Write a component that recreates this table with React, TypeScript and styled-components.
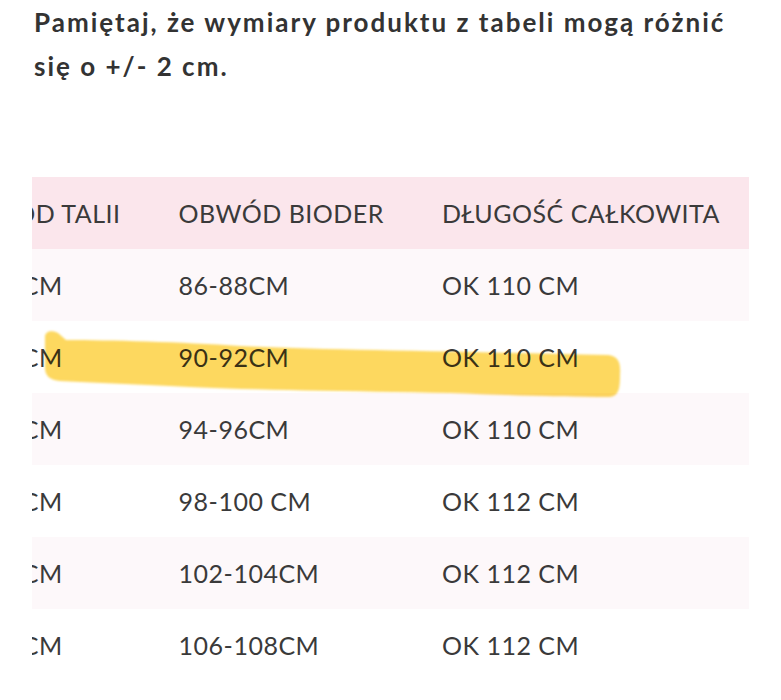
import React, { useLayoutEffect, useRef } from "react";
import styled, { createGlobalStyle } from "styled-components";

const Global = createGlobalStyle`
  html, body { margin: 0; padding: 0; background: #ffffff; }
  body { font-family: Lato, "Open Sans", sans-serif; }
`;

const Page = styled.div`
  position: relative;
  width: 781px;
  height: 700px;
  overflow: hidden;
  background: #fff;
`;

const Note = styled.p`
  margin: 0;
  padding: 0 0 0 34px;
  max-width: 730px;
  font-family: Lato, sans-serif;
  font-weight: 700;
  font-size: 26px;
  line-height: 44px;
  letter-spacing: 2px;
  color: #333333;
`;

const Scroller = styled.div`
  margin: 89px 32px 0 32px;
  overflow-x: auto;
  scrollbar-width: none;
  &::-webkit-scrollbar { display: none; }
`;

const Table = styled.table`
  border-collapse: collapse;
  border-spacing: 0;
  font-family: Lato, sans-serif;
  font-size: 25px;
  color: #3a3a3a;
  letter-spacing: 0.5px;
`;

const HeadRow = styled.tr`
  background: #fbe6ec;
`;

const Row = styled.tr<{ $tinted: boolean }>`
  background: ${(p) => (p.$tinted ? "#fdf8fa" : "#ffffff")};
`;

const Cell = styled.td`
  height: 72px;
  padding: 0 29px;
  white-space: nowrap;
  vertical-align: middle;
  font-weight: 400;
  text-align: left;
`;

const HeadCell = styled(Cell).attrs({ as: "th" })``;

const Marker = styled.svg`
  position: absolute;
  left: 0;
  top: 0;
  pointer-events: none;
  mix-blend-mode: multiply;
`;

const rows = [
  ["66-68CM", "86-88CM", "OK 110 CM"],
  ["70-72CM", "90-92CM", "OK 110 CM"],
  ["74-76CM", "94-96CM", "OK 110 CM"],
  ["78-80CM", "98-100 CM", "OK 112 CM"],
  ["82-84CM", "102-104CM", "OK 112 CM"],
  ["86-88CM", "106-108CM", "OK 112 CM"],
];

export default function App() {
  const scroller = useRef<HTMLDivElement>(null);

  useLayoutEffect(() => {
    const el = scroller.current;
    if (el) {
      el.scrollLeft = el.scrollWidth;
    }
  }, []);

  return (
    <Page>
      <Global />
      <Note>
        Pamiętaj, że wymiary produktu z tabeli mogą różnić się o +/- 2 cm.
      </Note>
      <Scroller ref={scroller}>
        <Table>
          <thead>
            <HeadRow>
              <HeadCell>OBWÓD TALII</HeadCell>
              <HeadCell>OBWÓD BIODER</HeadCell>
              <HeadCell>DŁUGOŚĆ CAŁKOWITA</HeadCell>
            </HeadRow>
          </thead>
          <tbody>
            {rows.map((r, i) => (
              <Row key={i} $tinted={i % 2 === 0}>
                {r.map((c, j) => (
                  <Cell key={j}>{c}</Cell>
                ))}
              </Row>
            ))}
          </tbody>
        </Table>
      </Scroller>
      <Marker width="781" height="700" viewBox="0 0 781 700">
        <defs>
          <filter id="soft" x="-5%" y="-20%" width="110%" height="140%">
            <feGaussianBlur stdDeviation="0.8" />
          </filter>
        </defs>
        <path
          filter="url(#soft)"
          fill="#fdd85e"
          d="M 45 337 C 45 331, 52 330, 58 333 L 66 340 C 110 340, 180 342, 240 346 C 320 350, 450 351, 608 355 C 618 356, 621 362, 620 375 C 620 388, 619 396, 610 397 C 560 397, 500 395, 450 393 C 350 391, 250 390, 190 387 C 150 385, 100 383, 60 381 C 50 380, 45 376, 45 368 Z"
        />
      </Marker>
    </Page>
  );
}
